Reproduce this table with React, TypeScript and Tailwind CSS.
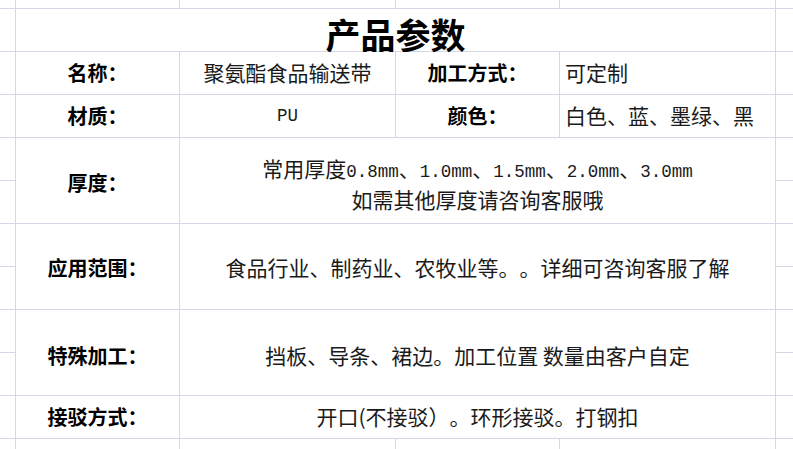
import React from "react";

// 产品参数表 — 仿电子表格的网格，行高 42px + 1px 网格线
const CJK = "font-['Noto_Sans_CJK_SC',sans-serif] [text-spacing-trim:space-all]";
const LABEL = `${CJK} flex items-center justify-center bg-white text-[20px] font-bold text-black`;
const VALUE = `${CJK} flex items-center justify-center bg-white text-[21px] text-[#1a1a1a]`;

function Mono({ children }: { children: React.ReactNode }) {
  return <span className="font-['Liberation_Mono',monospace] text-[17.5px]">{children}</span>;
}

function Blank() {
  return <div className="bg-white" />;
}

export default function App() {
  return (
    <div className="h-[449px] w-[793px] overflow-hidden bg-white">
      <div className="grid h-full grid-cols-[15px_163px_215px_163px_215px_1fr] grid-rows-[8px_repeat(10,42px)_1fr] gap-px bg-[#d5d7e7]">
        {/* top strip */}
        <Blank />
        <Blank />
        <Blank />
        <Blank />
        <Blank />
        <Blank />

        {/* title */}
        <Blank />
        <div className={`${CJK} col-span-4 flex justify-center bg-white pt-[8px] text-[35px] leading-[34px] font-bold text-black`}>
          产品参数
        </div>
        <Blank />

        {/* 名称 */}
        <Blank />
        <div className={LABEL}>名称：</div>
        <div className={VALUE}>聚氨酯食品输送带</div>
        <div className={LABEL}>加工方式：</div>
        <div className={`${VALUE} !justify-start pl-[5px]`}>可定制</div>
        <Blank />

        {/* 材质 */}
        <Blank />
        <div className={LABEL}>材质：</div>
        <div className={VALUE}>
          <Mono>PU</Mono>
        </div>
        <div className={LABEL}>颜色：</div>
        <div className={`${VALUE} !justify-start pl-[5px]`}>白色、蓝、墨绿、黑</div>
        <Blank />

        {/* 厚度 */}
        <Blank />
        <div className={`${LABEL} row-span-2 pt-[4px]`}>厚度：</div>
        <div className={`${VALUE} col-span-3 row-span-2 flex-col pt-[6px] leading-[27px]`}>
          <div>
            常用厚度<Mono>0.8mm</Mono>、<Mono>1.0mm</Mono>、<Mono>1.5mm</Mono>、<Mono>2.0mm</Mono>、
            <Mono>3.0mm</Mono>
          </div>
          <div>如需其他厚度请咨询客服哦</div>
        </div>
        <Blank />
        <Blank />
        <Blank />

        {/* 应用范围 */}
        <Blank />
        <div className={`${LABEL} row-span-2 pt-[3px]`}>应用范围：</div>
        <div className={`${VALUE} col-span-3 row-span-2 pt-[3px]`}>
          食品行业、制药业、农牧业等。。详细可咨询客服了解
        </div>
        <Blank />
        <Blank />
        <Blank />

        {/* 特殊加工 */}
        <Blank />
        <div className={`${LABEL} row-span-2 pt-[6px]`}>特殊加工：</div>
        <div className={`${VALUE} col-span-3 row-span-2 pt-[6px]`}>
          挡板、导条、裙边。加工位置 数量由客户自定
        </div>
        <Blank />
        <Blank />
        <Blank />

        {/* 接驳方式 */}
        <Blank />
        <div className={LABEL}>接驳方式：</div>
        <div className={`${VALUE} col-span-3`}>开口(不接驳）。环形接驳。打钢扣</div>
        <Blank />

        {/* bottom strip */}
        <Blank />
        <Blank />
        <Blank />
        <Blank />
        <Blank />
        <Blank />
      </div>
    </div>
  );
}
